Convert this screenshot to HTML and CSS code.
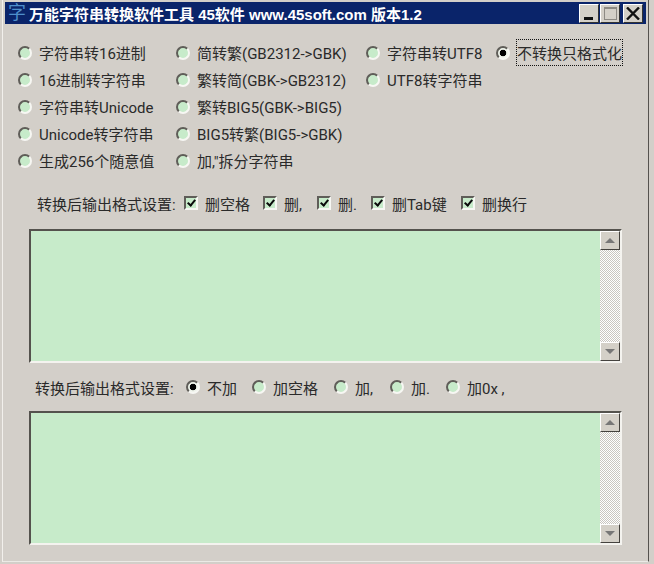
FILE: index.html
```html
<!DOCTYPE html>
<html>
<head>
    <meta charset="utf-8">
    <title>万能字符串转换软件工具</title>
    <link rel="stylesheet" href="styles.css">
</head>
<body>
    <div class="window">
        <div class="titlebar">
            <span class="app-icon">字</span>
            <span class="title">万能字符串转换软件工具 45软件 www.45soft.com 版本1.2</span>
            <div class="win-buttons">
                <button class="win-btn min-btn"><i></i></button>
                <button class="win-btn max-btn"><i></i></button>
                <button class="win-btn close-btn">
                    <svg width="14" height="13" viewBox="0 0 14 13"><path d="M1 0.5 L13 12.5 M13 0.5 L1 12.5" stroke="#111" stroke-width="2.4" fill="none"/></svg>
                </button>
            </div>
        </div>

        <div class="modes">
            <label class="opt"><input type="radio" name="mode"><span>字符串转16进制</span></label>
            <label class="opt"><input type="radio" name="mode"><span>简转繁(GB2312-&gt;GBK)</span></label>
            <label class="opt"><input type="radio" name="mode"><span>字符串转UTF8</span></label>
            <label class="opt"><input type="radio" name="mode" checked><span class="focused">不转换只格式化</span></label>

            <label class="opt"><input type="radio" name="mode"><span>16进制转字符串</span></label>
            <label class="opt"><input type="radio" name="mode"><span>繁转简(GBK-&gt;GB2312)</span></label>
            <label class="opt"><input type="radio" name="mode"><span>UTF8转字符串</span></label>
            <div></div>

            <label class="opt"><input type="radio" name="mode"><span>字符串转Unicode</span></label>
            <label class="opt"><input type="radio" name="mode"><span>繁转BIG5(GBK-&gt;BIG5)</span></label>
            <div></div>
            <div></div>

            <label class="opt"><input type="radio" name="mode"><span>Unicode转字符串</span></label>
            <label class="opt"><input type="radio" name="mode"><span>BIG5转繁(BIG5-&gt;GBK)</span></label>
            <div></div>
            <div></div>

            <label class="opt"><input type="radio" name="mode"><span>生成256个随意值</span></label>
            <label class="opt"><input type="radio" name="mode"><span>加,"拆分字符串</span></label>
        </div>

        <div class="format-row del-row">
            <span class="format-label">转换后输出格式设置:</span>
            <label class="opt del-1"><input type="checkbox" checked><span>删空格</span></label>
            <label class="opt del-2"><input type="checkbox" checked><span>删,</span></label>
            <label class="opt del-2"><input type="checkbox" checked><span>删.</span></label>
            <label class="opt del-3"><input type="checkbox" checked><span>删Tab键</span></label>
            <label class="opt"><input type="checkbox" checked><span>删换行</span></label>
        </div>

        <div class="text-box box-top">
            <textarea></textarea>
            <div class="scrollbar">
                <div class="arrow"><i class="up"></i></div>
                <div class="track"></div>
                <div class="arrow"><i class="down"></i></div>
            </div>
        </div>

        <div class="format-row add-row">
            <span class="format-label">转换后输出格式设置:</span>
            <label class="opt add-1"><input type="radio" name="add" checked><span>不加</span></label>
            <label class="opt add-2"><input type="radio" name="add"><span>加空格</span></label>
            <label class="opt add-3"><input type="radio" name="add"><span>加,</span></label>
            <label class="opt add-3"><input type="radio" name="add"><span>加.</span></label>
            <label class="opt"><input type="radio" name="add"><span>加0x ,</span></label>
        </div>

        <div class="text-box box-bottom">
            <textarea></textarea>
            <div class="scrollbar">
                <div class="arrow"><i class="up"></i></div>
                <div class="track"></div>
                <div class="arrow"><i class="down"></i></div>
            </div>
        </div>
    </div>
</body>
</html>
```

FILE: styles.css
```css
html, body {
    margin: 0;
    height: 100%;
    background: #d3cfc9;
}

body {
    font-family: Roboto, "Noto Sans CJK SC", sans-serif;
    font-size: 15px;
    color: #2a2a2a;
}

.window {
    box-sizing: border-box;
    width: 647px;
    height: 562px;
    margin-left: 2px;
    padding: 2px 3px 0 3px;
    background: #d3cfc9;
    border-left: 1px solid #f2f0ec;
    border-right: 1px solid #55524e;
    border-bottom: 1px solid #eceae6;
    overflow: hidden;
}

.titlebar {
    display: flex;
    align-items: center;
    height: 22px;
    margin: 0 -1px;
    padding: 0 3px 0 3px;
    background: #0a246a;
    color: #fff;
}

.app-icon {
    width: 20px;
    font-size: 18px;
    line-height: 22px;
    color: #4f8fcb;
}

.title {
    flex: 1;
    margin-left: 1px;
    font-family: "Liberation Sans", "Noto Sans CJK SC", sans-serif;
    font-size: 15px;
    font-weight: bold;
    white-space: nowrap;
}

.win-buttons {
    display: flex;
    gap: 1px;
}

.win-btn {
    display: flex;
    align-items: center;
    justify-content: center;
    box-sizing: border-box;
    width: 20px;
    height: 19px;
    margin: 0;
    padding: 0;
    background: #d4d0c8;
    border: 1px solid;
    border-color: #fff #333 #333 #fff;
}

.close-btn {
    margin-left: 2px;
}

.min-btn i {
    width: 9px;
    height: 3px;
    margin-top: 10px;
    margin-right: 2px;
    background: #111;
}

.max-btn i {
    box-sizing: border-box;
    width: 13px;
    height: 13px;
    border: 1px solid #8d8a84;
    border-top-width: 2px;
}

.modes {
    display: grid;
    grid-template-columns: 158px 190px 130px auto;
    grid-auto-rows: 27px;
    align-items: center;
    padding: 15px 0 0 12px;
}

.opt {
    display: flex;
    align-items: center;
    gap: 7px;
    white-space: nowrap;
}

input[type=radio],
input[type=checkbox] {
    appearance: none;
    flex: none;
    box-sizing: border-box;
    margin: 0;
    background: #c7ebca;
    border: 2px solid;
    border-color: #5f5d58 #f7f7f3 #f7f7f3 #5f5d58;
}

input[type=radio] {
    width: 14px;
    height: 14px;
    border-radius: 50%;
}

input[type=radio]:checked {
    background: radial-gradient(circle, #000 0 3px, #eef3ea 3.6px);
}

input[type=checkbox] {
    position: relative;
    width: 14px;
    height: 14px;
}

input[type=checkbox]:checked::after {
    content: "";
    position: absolute;
    left: 3px;
    top: 0;
    width: 3px;
    height: 6px;
    border: solid #0a0a0a;
    border-width: 0 2px 2px 0;
    transform: rotate(40deg);
}

.focused {
    margin: -3px -1px;
    padding: 2px 0;
    border: 1px dotted #111;
}

.format-row {
    display: flex;
    align-items: center;
    height: 20px;
}

.del-row {
    margin-top: 19px;
    padding-left: 31px;
}

.del-row .format-label {
    width: 147px;
}

.del-1 {
    width: 79px;
}

.del-2 {
    width: 54px;
}

.del-3 {
    width: 90px;
}

.add-row {
    margin-top: 14px;
    padding-left: 29px;
}

.add-row .format-label {
    width: 151px;
}

.add-1 {
    width: 66px;
}

.add-2 {
    width: 82px;
}

.add-3 {
    width: 56px;
}

.text-box {
    display: flex;
    box-sizing: border-box;
    width: 593px;
    height: 134px;
    margin-left: 23px;
    background: #c7ebca;
    border: 2px solid;
    border-color: #54524d #f4f3ef #f4f3ef #54524d;
}

.box-top {
    margin-top: 16px;
}

.box-bottom {
    margin-top: 14px;
}

textarea {
    flex: 1;
    padding: 0;
    border: 0;
    outline: none;
    resize: none;
    background: #c7ebca;
}

.scrollbar {
    display: flex;
    flex-direction: column;
    width: 20px;
}

.track {
    flex: 1;
    background: repeating-conic-gradient(#fff 0 25%, #c9c6c0 0 50%) 0 0 / 2px 2px;
}

.arrow {
    display: flex;
    align-items: center;
    justify-content: center;
    box-sizing: border-box;
    height: 19px;
    background: #d4d0c8;
    border: 1px solid;
    border-color: #fff #44423e #44423e #fff;
}

.arrow i {
    border-left: 5px solid transparent;
    border-right: 5px solid transparent;
}

.arrow .up {
    border-bottom: 5px solid #777;
}

.arrow .down {
    border-top: 5px solid #777;
}
```
